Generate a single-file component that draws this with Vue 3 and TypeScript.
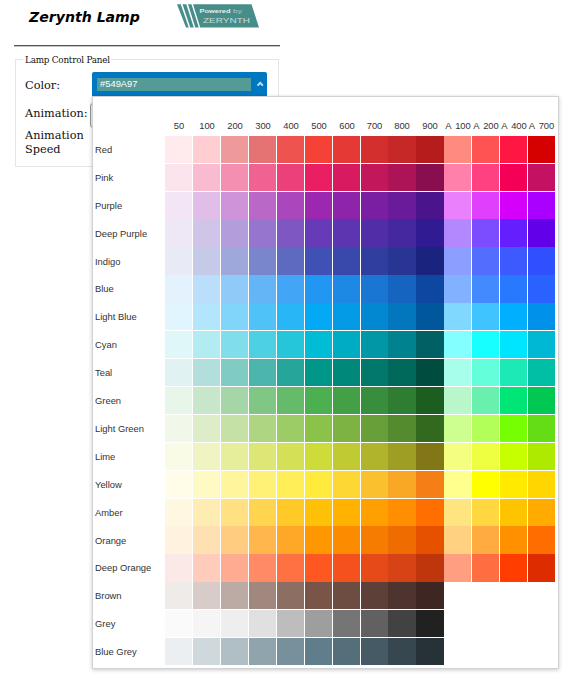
<script setup lang="ts">
interface Hue {
  name: string
  shades: string
  flush?: boolean
  short?: boolean
  low?: boolean
}

const columns: string[] = ['50', '100', '200', '300', '400', '500', '600', '700', '800', '900', 'A 100', 'A 200', 'A 400', 'A 700']

const hues: Hue[] = [
  { name: 'Red', shades: 'ffebee ffcdd2 ef9a9a e57373 ef5350 f44336 e53935 d32f2f c62828 b71c1c ff8a80 ff5252 ff1744 d50000' },
  { name: 'Pink', shades: 'fce4ec f8bbd0 f48fb1 f06292 ec407a e91e63 d81b60 c2185b ad1457 880e4f ff80ab ff4081 f50057 c51162' },
  { name: 'Purple', flush: true, short: true, shades: 'f3e5f5 e1bee7 ce93d8 ba68c8 ab47bc 9c27b0 8e24aa 7b1fa2 6a1b9a 4a148c ea80fc e040fb d500f9 aa00ff' },
  { name: 'Deep Purple', flush: true, low: true, shades: 'ede7f6 d1c4e9 b39ddb 9575cd 7e57c2 673ab7 5e35b1 512da8 4527a0 311b92 b388ff 7c4dff 651fff 6200ea' },
  { name: 'Indigo', flush: true, low: true, shades: 'e8eaf6 c5cae9 9fa8da 7986cb 5c6bc0 3f51b5 3949ab 303f9f 283593 1a237e 8c9eff 536dfe 3d5afe 304ffe' },
  { name: 'Blue', flush: true, shades: 'e3f2fd bbdefb 90caf9 64b5f6 42a5f5 2196f3 1e88e5 1976d2 1565c0 0d47a1 82b1ff 448aff 2979ff 2962ff' },
  { name: 'Light Blue', shades: 'e1f5fe b3e5fc 81d4fa 4fc3f7 29b6f6 03a9f4 039be5 0288d1 0277bd 01579b 80d8ff 40c4ff 00b0ff 0091ea' },
  { name: 'Cyan', shades: 'e0f7fa b2ebf2 80deea 4dd0e1 26c6da 00bcd4 00acc1 0097a7 00838f 006064 84ffff 18ffff 00e5ff 00b8d4' },
  { name: 'Teal', shades: 'e0f2f1 b2dfdb 80cbc4 4db6ac 26a69a 009688 00897b 00796b 00695c 004d40 a7ffeb 64ffda 1de9b6 00bfa5' },
  { name: 'Green', shades: 'e8f5e9 c8e6c9 a5d6a7 81c784 66bb6a 4caf50 43a047 388e3c 2e7d32 1b5e20 b9f6ca 69f0ae 00e676 00c853' },
  { name: 'Light Green', shades: 'f1f8e9 dcedc8 c5e1a5 aed581 9ccc65 8bc34a 7cb342 689f38 558b2f 33691e ccff90 b2ff59 76ff03 64dd17' },
  { name: 'Lime', shades: 'f9fbe7 f0f4c3 e6ee9c dce775 d4e157 cddc39 c0ca33 afb42b 9e9d24 827717 f4ff81 eeff41 c6ff00 aeea00' },
  { name: 'Yellow', shades: 'fffde7 fff9c4 fff59d fff176 ffee58 ffeb3b fdd835 fbc02d f9a825 f57f17 ffff8d ffff00 ffea00 ffd600' },
  { name: 'Amber', flush: true, short: true, shades: 'fff8e1 ffecb3 ffe082 ffd54f ffca28 ffc107 ffb300 ffa000 ff8f00 ff6f00 ffe57f ffd740 ffc400 ffab00' },
  { name: 'Orange', flush: true, low: true, shades: 'fff3e0 ffe0b2 ffcc80 ffb74d ffa726 ff9800 fb8c00 f57c00 ef6c00 e65100 ffd180 ffab40 ff9100 ff6d00' },
  { name: 'Deep Orange', flush: true, shades: 'fbe9e7 ffccbc ffab91 ff8a65 ff7043 ff5722 f4511e e64a19 d84315 bf360c ff9e80 ff6e40 ff3d00 dd2c00' },
  { name: 'Brown', shades: 'efebe9 d7ccc8 bcaaa4 a1887f 8d6e63 795548 6d4c41 5d4037 4e342e 3e2723' },
  { name: 'Grey', shades: 'fafafa f5f5f5 eeeeee e0e0e0 bdbdbd 9e9e9e 757575 616161 424242 212121' },
  { name: 'Blue Grey', shades: 'eceff1 cfd8dc b0bec5 90a4ae 78909c 607d8b 546e7a 455a64 37474f 263238' },
]
</script>

<template>
  <main class="page">
    <header class="header">
      <h1>Zerynth Lamp</h1>
      <svg class="logo" width="83" height="25" viewBox="0 0 83 25">
        <g fill="#478e8b">
          <path d="M0 .3h3.800l8 23.200H9z" />
          <path d="M5.500 .3h3.800l7.500 23.200h-3.500z" />
          <path d="M11 .3h3.500l7.300 23.200h-3.500z" />
          <path d="M16 .3h58.500l7.500 23.200H23.200z" />
        </g>
        <text x="22.500" y="9.300" font-size="6" textLength="31" lengthAdjust="spacingAndGlyphs" font-weight="bold" fill="#e3f2f0">Powered</text>
        <text x="56" y="9.300" font-size="6" textLength="9" lengthAdjust="spacingAndGlyphs" fill="#a9cfcd">by</text>
        <text x="26" y="18.900" font-size="7.800" textLength="47" lengthAdjust="spacingAndGlyphs" fill="#c4dfdd">ZERYNTH</text>
      </svg>
    </header>
    <section class="panel">
      <h2 class="legend">Lamp Control Panel</h2>
      <div class="row color-row">
        <label>Color:</label>
        <div class="picker">
          <button class="trigger">
            <span class="value">#549A97</span>
            <svg width="8" height="6" viewBox="0 0 8 6"><path d="M1.500 4.700 4.200 1.900 6.900 4.700" fill="none" stroke="#c4e6fb" stroke-width="1.900" /></svg>
          </button>
          <div class="popup">
            <div class="swatch-row head">
              <span></span>
              <span v-for="c in columns" :key="c" class="col-name">{{ c }}</span>
            </div>
            <div v-for="h in hues" :key="h.name" class="swatch-row" :class="{ flush: h.flush, short: h.short, low: h.low }">
              <span class="hue">{{ h.name }}</span>
              <i v-for="(s, i) in h.shades.split(' ')" :key="i" class="swatch" :class="{ wide: i === 8 || i === 9 }" :style="{ backgroundColor: '#' + s }"></i>
            </div>
          </div>
        </div>
      </div>
      <div class="row animation-row">
        <label>Animation:</label>
        <span class="select"></span>
      </div>
      <div class="row speed-row"><label>Animation<br />Speed</label></div>
    </section>
  </main>
</template>

<style>
body {
  background: #fff;
}
</style>

<style scoped>
.page {
  box-sizing: border-box;
  width: 579px;
  height: 681px;
  padding-left: 14px;
  overflow: hidden;
  background: #fff;
  color: #111;
  font-family: "DejaVu Serif", serif;
}
.header {
  box-sizing: border-box;
  display: flex;
  width: 265.5px;
  height: 46px;
  padding: 4px 0 0 14px;
  border-bottom: 1px solid #555;
  box-shadow: 0 1px 0 #c4c4c4;
}
h1 {
  width: 148px;
  margin: 5px 0 0;
  padding-left: 1px;
  color: #000;
  font: italic bold 14.1px/16px "DejaVu Sans", sans-serif;
  white-space: nowrap;
}
.logo {
  font-family: "Liberation Sans", sans-serif;
}
.panel {
  box-sizing: border-box;
  width: 264px;
  height: 108px;
  margin: 13px 0 0 1px;
  border: 1px solid #e4e4e4;
}
.legend {
  width: 86px;
  height: 12px;
  margin: -6px 0 0 7px;
  padding-left: 2px;
  background: #fff;
  font-size: 8.8px;
  font-weight: normal;
  letter-spacing: -0.21px;
  line-height: 12px;
  white-space: nowrap;
}
.row {
  display: flex;
  padding-left: 9px;
  font-size: 11.3px;
}
.row label {
  flex: none;
  width: 67px;
  line-height: 14px;
}
.color-row {
  height: 35px;
  padding-top: 6px;
  box-sizing: border-box;
}
.color-row label {
  padding-top: 7px;
}
.picker {
  position: relative;
  font-family: "Liberation Sans", sans-serif;
}
.trigger {
  box-sizing: border-box;
  display: flex;
  align-items: flex-start;
  gap: 5px;
  width: 175px;
  height: 25px;
  padding: 6px 3px 0 5px;
  border: 0;
  border-radius: 2px 2px 0 0;
  background: #0077c1;
}
.trigger svg {
  flex: none;
  margin-top: 3px;
}
.value {
  box-sizing: border-box;
  flex: none;
  width: 154px;
  height: 13px;
  padding-left: 3px;
  background: #549a97;
  color: #fff;
  font: 9.4px/12px "Liberation Sans", sans-serif;
  text-align: left;
}
.popup {
  box-sizing: border-box;
  position: absolute;
  z-index: 1;
  top: 24px;
  left: 0;
  width: 467px;
  height: 573px;
  padding: 17px 3px 3px 2px;
  border: 1px solid #d2d2d2;
  background: #fff;
  box-shadow: 0 1px 4px rgba(0, 0, 0, 0.22);
  color: #333;
  font-size: 9.4px;
}
.swatch-row {
  display: grid;
  grid-template-columns: 70px repeat(7, 28px) 27px repeat(5, 28px) 27px;
  height: 28px;
  line-height: 28px;
}
.swatch-row.head {
  height: 22px;
  line-height: 24px;
}
.swatch-row.short {
  height: 27px;
}
.col-name {
  display: flex;
  justify-content: center;
  white-space: pre;
  word-spacing: 1.6px;
}
.hue {
  height: 27px;
  white-space: nowrap;
}
.low .hue {
  box-sizing: border-box;
  padding-top: 1px;
}
.swatch {
  width: 27px;
  height: 27px;
}
.swatch.wide {
  width: 28px;
}
.flush .swatch {
  height: 100%;
}
.animation-row {
  height: 28px;
  align-items: center;
}
.animation-row label {
  width: 65px;
  padding-bottom: 2px;
  white-space: nowrap;
}
.select {
  box-sizing: border-box;
  width: 166px;
  height: 25px;
  border: 1px solid #999;
  border-radius: 3px;
  background: #eee;
}
</style>
